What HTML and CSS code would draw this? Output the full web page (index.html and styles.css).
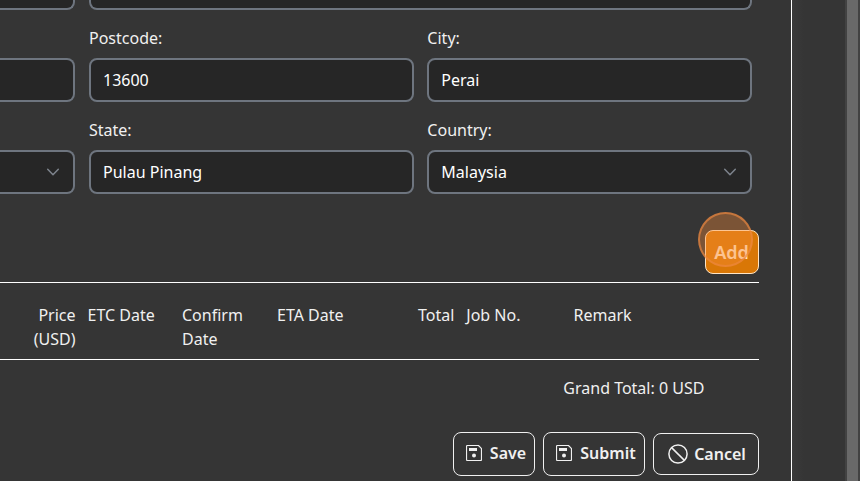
FILE: index.html
```html
<!DOCTYPE html>
<html lang="en">
<head>
<meta charset="utf-8">
<title>Order form</title>
<link rel="stylesheet" href="styles.css">
</head>
<body>
<main class="panel">
  <form class="fields">
    <div class="box box-clipped"></div>
    <div class="box box-clipped box-wide"></div>

    <div class="field"><div class="label"></div><div class="box box-open"></div></div>
    <div class="field"><div class="label">Postcode:</div><div class="box">13600</div></div>
    <div class="field"><div class="label">City:</div><div class="box">Perai</div></div>

    <div class="field"><div class="label"></div><div class="box box-open"><span></span><svg class="chevron" viewBox="0 0 14 14"><path d="M1.7 4.2 7 9.7l5.3-5.5"/></svg></div></div>
    <div class="field"><div class="label">State:</div><div class="box">Pulau Pinang</div></div>
    <div class="field"><div class="label">Country:</div><div class="box"><span>Malaysia</span><svg class="chevron" viewBox="0 0 14 14"><path d="M1.7 4.2 7 9.7l5.3-5.5"/></svg></div></div>
  </form>

  <div class="toolbar">
    <div class="add-wrap">
      <button class="button add">Add</button>
      <span class="click-ring"></span>
    </div>
  </div>

  <div class="table-head">
    <div class="right">Price (USD)</div>
    <div>ETC Date</div>
    <div>Confirm Date</div>
    <div>ETA Date</div>
    <div class="right">Total</div>
    <div>Job No.</div>
    <div>Remark</div>
  </div>
  <div class="total">Grand Total: 0 USD</div>

  <div class="actions">
    <button class="button save"><svg class="disk" viewBox="0 0 16 16"><path d="M1.5.5h11l3 3v11a1 1 0 0 1-1 1h-13a1 1 0 0 1-1-1v-13a1 1 0 0 1 1-1z"/><path class="solid" d="M3 3h8v3H3z"/><circle class="solid" cx="8" cy="10.5" r="2"/></svg>Save</button>
    <button class="button submit"><svg class="disk" viewBox="0 0 16 16"><path d="M1.5.5h11l3 3v11a1 1 0 0 1-1 1h-13a1 1 0 0 1-1-1v-13a1 1 0 0 1 1-1z"/><path class="solid" d="M3 3h8v3H3z"/><circle class="solid" cx="8" cy="10.5" r="2"/></svg>Submit</button>
    <button class="button cancel"><svg class="ban" viewBox="0 0 20 20"><circle cx="10" cy="10" r="9.1"/><path d="m3.6 3.6 12.8 12.8"/></svg>Cancel</button>
  </div>
</main>
<aside class="gutter"></aside>
<div class="scrollbar"><div class="thumb"></div></div>
</body>
</html>
```
FILE: styles.css
```css
* { box-sizing: border-box; }

body {
  display: flex;
  height: 481px;
  margin: 0;
  overflow: hidden;
  background: #353535;
  color: #f0f0f0;
  font: 16px/24px "Noto Sans", sans-serif;
}

.panel {
  width: 792px;
  height: 481px;
  border-right: 1px solid #fff;
}

.fields {
  display: grid;
  grid-template-columns: 75.3px 324.7px 324.7px;
  column-gap: 13.7px;
  row-gap: 16px;
}

.label {
  height: 24px;
  margin-bottom: 8px;
}

.box {
  display: flex;
  align-items: center;
  justify-content: space-between;
  height: 44px;
  padding: 0 12px;
  border: 2px solid #6e757f;
  border-radius: 8px;
  background: #262626;
  color: #fff;
}

.box-clipped {
  height: 10px;
  border-top: 0;
  border-left: 0;
  border-radius: 0 0 8px 0;
}

.box-wide {
  grid-column: span 2;
  border-left: 2px solid #6e757f;
  border-radius: 0 0 8px 8px;
}

.box-open {
  border-left: 0;
  border-radius: 0 8px 8px 0;
}

.chevron {
  width: 14px;
  height: 14px;
  margin-right: 1px;
  fill: none;
  stroke: #7d838c;
  stroke-width: 1.5;
  stroke-linecap: round;
  stroke-linejoin: round;
}

.toolbar {
  display: flex;
  justify-content: flex-end;
  height: 88px;
  width: 759px;
  padding-top: 36px;
}

.add-wrap {
  position: relative;
  height: 44px;
}

.button {
  display: flex;
  align-items: center;
  justify-content: center;
  height: 44px;
  padding: 0;
  border: 1px solid #f0f0f0;
  border-radius: 8px;
  background: transparent;
  color: #f0f0f0;
  font: 600 16px/24px "Noto Sans", sans-serif;
}

.add {
  width: 54px;
  padding-right: 1px;
  border-color: #ffe4c4;
  background: #d97706;
  color: #ffe2c2;
  font-size: 18px;
}

.click-ring {
  position: absolute;
  top: -18px;
  left: -7px;
  width: 55px;
  height: 55px;
  border: 2px solid rgba(237, 137, 64, 0.65);
  border-radius: 50%;
  background: rgba(249, 142, 57, 0.36);
}

.table-head {
  display: grid;
  grid-template-columns: 75.5px 82.5px 83px 83px 82.3px 95.2px 171.5px;
  column-gap: 12px;
  width: 759px;
  height: 78px;
  padding-top: 20px;
  border-top: 1px solid #fff;
  border-bottom: 1px solid #fff;
}

.right {
  padding-left: 24px;
  text-align: right;
}

.total {
  width: 704.4px;
  margin-top: 16px;
  text-align: right;
}

.actions {
  display: flex;
  align-items: center;
  justify-content: flex-end;
  gap: 8px;
  width: 759px;
  margin-top: 32px;
}

.save { width: 82px; }
.submit { width: 102px; }
.save,
.submit { padding-bottom: 2px; }
.cancel { width: 106px; height: 42px; padding-left: 2px; }

.disk {
  width: 16px;
  height: 16px;
  margin: 0 8px 0 4px;
  fill: none;
  stroke: #f0f0f0;
  stroke-width: 1.2;
}

.disk .solid {
  fill: #f0f0f0;
  stroke: none;
}

.ban {
  width: 20px;
  height: 20px;
  margin-right: 6px;
  fill: none;
  stroke: #f0f0f0;
  stroke-width: 1.5;
}

.gutter {
  width: 53px;
  background: linear-gradient(90deg, #3a3a3a, #353535 12px);
}

.scrollbar {
  width: 15px;
  padding: 0 2px;
  background: #424242;
}

.thumb {
  height: 481px;
  background: #696969;
}
```
